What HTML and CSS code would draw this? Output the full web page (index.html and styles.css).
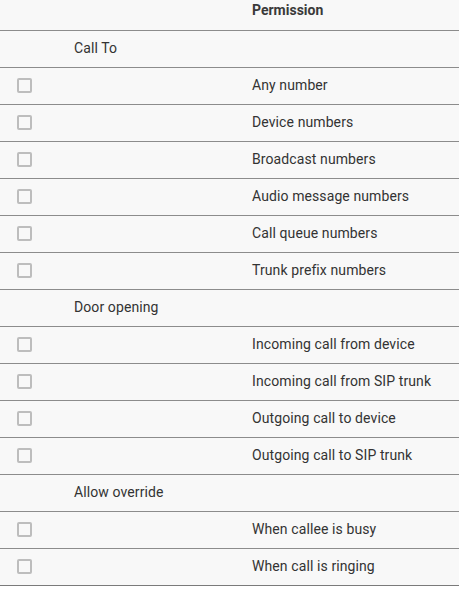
FILE: index.html
```html
<!DOCTYPE html>
<html>
<head>
<meta charset="utf-8">
<link rel="stylesheet" href="styles.css">
</head>
<body>
<div class="card">
  <div class="row head">
    <div class="cell"></div>
    <div class="cell"></div>
    <div class="cell">Permission</div>
  </div>
  <div class="row"><div class="cell"></div><div class="cell">Call To</div><div class="cell"></div></div>
  <div class="row"><div class="cell"><span class="cb"></span></div><div class="cell"></div><div class="cell">Any number</div></div>
  <div class="row"><div class="cell"><span class="cb"></span></div><div class="cell"></div><div class="cell">Device numbers</div></div>
  <div class="row"><div class="cell"><span class="cb"></span></div><div class="cell"></div><div class="cell">Broadcast numbers</div></div>
  <div class="row"><div class="cell"><span class="cb"></span></div><div class="cell"></div><div class="cell">Audio message numbers</div></div>
  <div class="row"><div class="cell"><span class="cb"></span></div><div class="cell"></div><div class="cell">Call queue numbers</div></div>
  <div class="row"><div class="cell"><span class="cb"></span></div><div class="cell"></div><div class="cell">Trunk prefix numbers</div></div>
  <div class="row"><div class="cell"></div><div class="cell">Door opening</div><div class="cell"></div></div>
  <div class="row"><div class="cell"><span class="cb"></span></div><div class="cell"></div><div class="cell">Incoming call from device</div></div>
  <div class="row"><div class="cell"><span class="cb"></span></div><div class="cell"></div><div class="cell">Incoming call from SIP trunk</div></div>
  <div class="row"><div class="cell"><span class="cb"></span></div><div class="cell"></div><div class="cell">Outgoing call to device</div></div>
  <div class="row"><div class="cell"><span class="cb"></span></div><div class="cell"></div><div class="cell">Outgoing call to SIP trunk</div></div>
  <div class="row"><div class="cell"></div><div class="cell">Allow override</div><div class="cell"></div></div>
  <div class="row"><div class="cell"><span class="cb"></span></div><div class="cell"></div><div class="cell">When callee is busy</div></div>
  <div class="row last"><div class="cell"><span class="cb"></span></div><div class="cell"></div><div class="cell">When call is ringing</div></div>
</div>
</body>
</html>
```
FILE: styles.css
```css
html, body {
  margin: 0;
  padding: 0;
  background: #ffffff;
}
body {
  font-family: Roboto, "Liberation Sans", sans-serif;
  font-size: 14px;
  color: #333333;
  letter-spacing: 0.1px;
}
.card {
  background: #f8f8f8;
  box-shadow: 0 2px 2px rgba(0, 0, 0, 0.22);
}
.row {
  display: grid;
  grid-template-columns: 58px 178px 1fr;
  height: 36px;
  align-items: center;
  border-bottom: 1px solid #8c8c8c;
}
.row.last {
  border-bottom: 1px solid #7a7a7a;
}
.row.head {
  height: 30px;
  align-items: start;
  font-weight: bold;
  color: #3a3a3a;
  letter-spacing: 0;
}
.cell {
  padding-left: 16px;
  padding-bottom: 2px;
  line-height: 20px;
  white-space: nowrap;
}
.head .cell {
  padding-bottom: 0;
}
.row .cell:first-child {
  padding-left: 17px;
  padding-bottom: 0;
  display: flex;
  align-items: center;
}
.cb {
  display: block;
  width: 11px;
  height: 11px;
  border: 2px solid #bdbdbd;
  border-radius: 2px;
  background: #f8f8f8;
  margin-top: -1px;
}
```
